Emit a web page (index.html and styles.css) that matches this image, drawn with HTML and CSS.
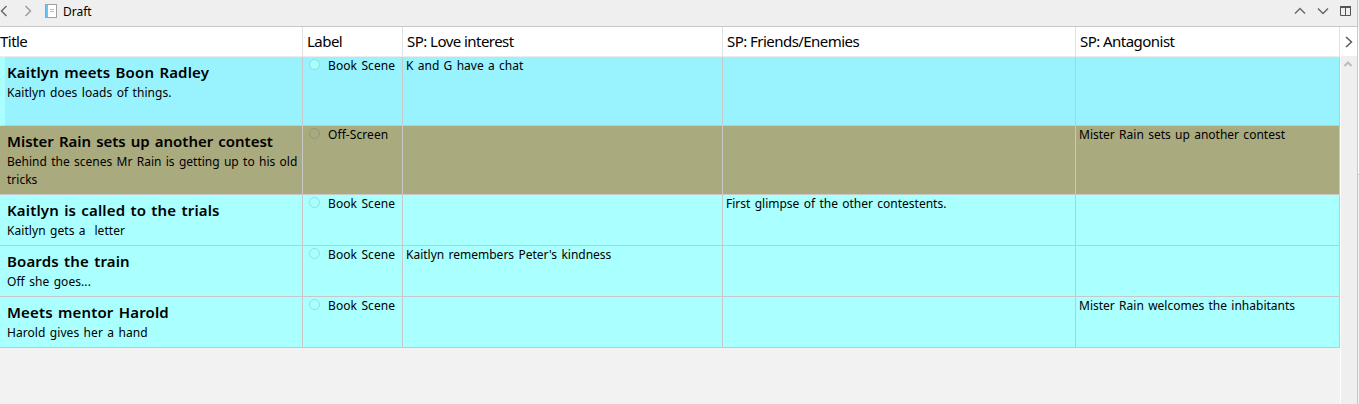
FILE: index.html
```
<!DOCTYPE html>
<html lang="en">
<head>
    <meta charset="UTF-8">
    <meta name="viewport" content="width=device-width, initial-scale=1.0">
    <title>Draft</title>
    <link rel="stylesheet" href="styles.css">
</head>
<body>
    <div class="window">
        <div class="main">
            <div class="toolbar">
                <svg class="nav" width="8" height="12" viewBox="0 0 8 12"><path d="M6.5 1L1.5 6l5 5" stroke="#666"/></svg>
                <svg class="nav forward" width="8" height="12" viewBox="0 0 8 12"><path d="M1.5 1l5 5-5 5" stroke="#999"/></svg>
                <svg class="doc" width="12" height="14" viewBox="0 0 12 14">
                    <rect class="thin" x="0.5" y="0.5" width="11" height="13" fill="#fff" stroke="#a0a0a0"/>
                    <rect x="1" y="1" width="2" height="12" fill="#66c5ff"/>
                    <path class="thin" d="M5 5.5h4M5 7.5h4" stroke="#bbb"/>
                </svg>
                <span class="doc-name">Draft</span>
                <svg class="up" width="12" height="8" viewBox="0 0 12 8"><path d="M1 6.5l5-5 5 5" stroke="#666"/></svg>
                <svg class="down" width="12" height="8" viewBox="0 0 12 8"><path d="M1 1.5l5 5 5-5" stroke="#666"/></svg>
                <svg class="split" width="11" height="10" viewBox="0 0 11 10">
                    <path class="thin" d="M0.5 1v8.5h10V1M5.5 1v8" stroke="#555"/>
                    <path class="thin" d="M0 0.5h11M0 1.5h11" stroke="#555"/>
                </svg>
            </div>
            <div class="content">
                <div class="outline">
                    <div class="row header">
                        <div class="head">Title</div>
                        <div class="head">Label</div>
                        <div class="head">SP: Love interest</div>
                        <div class="head">SP: Friends/Enemies</div>
                        <div class="head">SP: Antagonist</div>
                    </div>
                    <div class="row tall selected">
                        <div class="cell title"><h2>Kaitlyn meets Boon Radley</h2><p>Kaitlyn does loads of things.</p></div>
                        <div class="cell label"><i class="dot"></i>Book Scene</div>
                        <div class="cell">K and G have a chat</div>
                        <div class="cell"></div>
                        <div class="cell"></div>
                    </div>
                    <div class="row tall offscreen">
                        <div class="cell title"><h2>Mister Rain sets up another contest</h2><p>Behind the scenes Mr Rain is getting up to his old tricks</p></div>
                        <div class="cell label"><i class="dot"></i>Off-Screen</div>
                        <div class="cell"></div>
                        <div class="cell"></div>
                        <div class="cell">Mister Rain sets up another contest</div>
                    </div>
                    <div class="row">
                        <div class="cell title"><h2>Kaitlyn is called to the trials</h2><p>Kaitlyn gets a&nbsp; letter</p></div>
                        <div class="cell label"><i class="dot"></i>Book Scene</div>
                        <div class="cell"></div>
                        <div class="cell">First glimpse of the other contestents.</div>
                        <div class="cell"></div>
                    </div>
                    <div class="row">
                        <div class="cell title"><h2>Boards the train</h2><p>Off she goes...</p></div>
                        <div class="cell label"><i class="dot"></i>Book Scene</div>
                        <div class="cell">Kaitlyn remembers Peter's kindness</div>
                        <div class="cell"></div>
                        <div class="cell"></div>
                    </div>
                    <div class="row">
                        <div class="cell title"><h2>Meets mentor Harold</h2><p>Harold gives her a hand</p></div>
                        <div class="cell label"><i class="dot"></i>Book Scene</div>
                        <div class="cell"></div>
                        <div class="cell"></div>
                        <div class="cell">Mister Rain welcomes the inhabitants</div>
                    </div>
                </div>
                <div class="side">
                    <div class="more"><svg width="8" height="12" viewBox="0 0 8 12"><path d="M1 1l5.5 5L1 11" stroke="#555"/></svg></div>
                    <div class="scrollbar"><svg width="8" height="6" viewBox="0 0 8 6"><path class="thick" d="M0.5 5L4 1.5 7.5 5" stroke="#bbb"/></svg></div>
                </div>
            </div>
        </div>
        <div class="edge"><div class="edge-top"></div></div>
    </div>
</body>
</html>
```
FILE: styles.css
```
* {
    margin: 0;
    padding: 0;
    box-sizing: border-box;
}

body {
    background: #f2f2f2;
    color: #000;
    font-family: "Noto Sans", sans-serif;
    font-size: 12px;
    overflow: hidden;
}

svg {
    display: block;
    flex: none;
    fill: none;
    stroke-width: 1.4;
}

.thin {
    stroke-width: 1;
}

.thick {
    stroke-width: 2;
}

.window {
    display: flex;
    width: 1359px;
    height: 404px;
}

.main {
    display: flex;
    flex-direction: column;
    width: 1357px;
}

.toolbar {
    display: flex;
    align-items: center;
    height: 27px;
    padding: 0 6px 4px 0;
    background: #efefef;
    border-bottom: 1px solid #c8c8c8;
}

.forward {
    margin-left: 16px;
}

.doc {
    margin: 0 6px 0 13px;
}

.up {
    margin-left: auto;
}

.down {
    margin: 0 11px;
}

.content {
    display: flex;
    flex: 1;
}

.outline {
    width: 1340px;
}

.row {
    display: grid;
    grid-template-columns: 303px 100px 320px 353px 264px;
    height: 51px;
    background: #aff;
}

.row.tall {
    height: 69px;
}

.row.header {
    height: 30px;
    background: #fff;
    border-bottom: 1px solid #c8c8c8;
}

.head {
    padding-left: 4px;
    border-right: 1px solid #e2e2e2;
    border-bottom: 1px solid #ececec;
    font-size: 15px;
    letter-spacing: -0.54px;
    line-height: 29px;
    white-space: nowrap;
}

.head:first-child {
    padding-left: 0;
}

.cell {
    padding-left: 3px;
    border-right: 1px solid #c8c8c8;
    border-bottom: 1px solid #c8c8c8;
    line-height: 18px;
    word-spacing: 1.2px;
    white-space: nowrap;
}

.title {
    padding: 6px 0 0 7px;
    letter-spacing: 0.06px;
    white-space: normal;
}

.title h2 {
    margin-bottom: 2px;
    font-size: 15px;
    line-height: 19px;
    font-weight: 600;
    letter-spacing: 0.15px;
}

.label {
    display: flex;
    padding-left: 6px;
    letter-spacing: 0.08px;
}

.dot {
    width: 11px;
    height: 11px;
    margin: 2px 8px 0 0;
    border: 1px solid rgba(0, 80, 80, 0.17);
    border-radius: 50%;
}

.selected {
    background: #99f3ff;
}

.selected .title {
    border-left: 5px solid #aff;
    padding-left: 2px;
}

.selected .dot {
    background: #aff;
}

.offscreen {
    background: #aaaa7f;
}

.offscreen .title {
    letter-spacing: 0;
}

.offscreen .title h2 {
    letter-spacing: -0.02px;
}

.side {
    display: flex;
    flex-direction: column;
    width: 17px;
    border-left: 1px solid #fff;
    background: #efefef;
}

.more {
    height: 29px;
    padding: 9px 0 0 4px;
    background: #fff;
}

.scrollbar {
    padding: 5px 0 0 3px;
}

.edge {
    width: 2px;
    border-left: 1px solid #c8c8c8;
    background: #efefef;
}

.edge-top {
    height: 175px;
    background: #fff;
    border-top: 27px solid #efefef;
    border-bottom: 1px solid #c8c8c8;
}
```
